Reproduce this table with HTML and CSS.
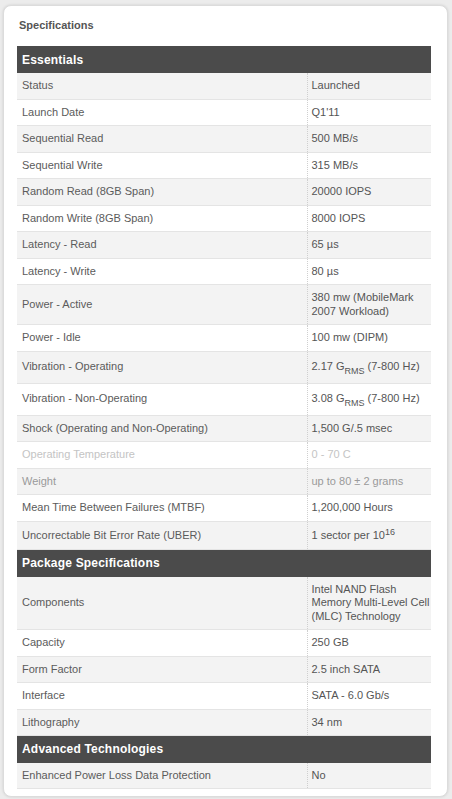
FILE: index.html
```html
<!DOCTYPE html>
<html>
<head>
<meta charset="utf-8">
<link rel="stylesheet" href="styles.css">
</head>
<body>
<div class="card">
  <h2 class="title">Specifications</h2>
  <table class="spec">
    <colgroup>
      <col class="col-k">
      <col class="col-v">
    </colgroup>
    <tbody>
      <tr class="head"><th colspan="2">Essentials</th></tr>
      <tr><td class="k">Status</td><td class="v">Launched</td></tr>
      <tr><td class="k">Launch Date</td><td class="v">Q1'11</td></tr>
      <tr><td class="k">Sequential Read</td><td class="v">500 MB/s</td></tr>
      <tr><td class="k">Sequential Write</td><td class="v">315 MB/s</td></tr>
      <tr><td class="k">Random Read (8GB Span)</td><td class="v">20000 IOPS</td></tr>
      <tr><td class="k">Random Write (8GB Span)</td><td class="v">8000 IOPS</td></tr>
      <tr><td class="k">Latency - Read</td><td class="v">65 µs</td></tr>
      <tr><td class="k">Latency - Write</td><td class="v">80 µs</td></tr>
      <tr><td class="k">Power - Active</td><td class="v">380 mw (MobileMark 2007 Workload)</td></tr>
      <tr><td class="k">Power - Idle</td><td class="v">100 mw (DIPM)</td></tr>
      <tr class="tall"><td class="k">Vibration - Operating</td><td class="v">2.17 G<sub>RMS</sub> (7-800 Hz)</td></tr>
      <tr class="tall"><td class="k">Vibration - Non-Operating</td><td class="v">3.08 G<sub>RMS</sub> (7-800 Hz)</td></tr>
      <tr><td class="k">Shock (Operating and Non-Operating)</td><td class="v">1,500 G/.5 msec</td></tr>
      <tr class="faded"><td class="k">Operating Temperature</td><td class="v">0 - 70 C</td></tr>
      <tr class="dim"><td class="k">Weight</td><td class="v">up to 80 ± 2 grams</td></tr>
      <tr><td class="k">Mean Time Between Failures (MTBF)</td><td class="v">1,200,000 Hours</td></tr>
      <tr class="sup-row"><td class="k">Uncorrectable Bit Error Rate (UBER)</td><td class="v">1 sector per 10<sup>16</sup></td></tr>
    </tbody>
    <tbody>
      <tr class="head"><th colspan="2">Package Specifications</th></tr>
      <tr><td class="k">Components</td><td class="v">Intel NAND Flash Memory Multi-Level Cell (MLC) Technology</td></tr>
      <tr><td class="k">Capacity</td><td class="v">250 GB</td></tr>
      <tr><td class="k">Form Factor</td><td class="v">2.5 inch SATA</td></tr>
      <tr><td class="k">Interface</td><td class="v">SATA - 6.0 Gb/s</td></tr>
      <tr><td class="k">Lithography</td><td class="v">34 nm</td></tr>
    </tbody>
    <tbody>
      <tr class="head"><th colspan="2">Advanced Technologies</th></tr>
      <tr><td class="k">Enhanced Power Loss Data Protection</td><td class="v">No</td></tr>
    </tbody>
  </table>
</div>
</body>
</html>
```
FILE: styles.css
```css
html, body {
  margin: 0;
  padding: 0;
}
body {
  background: #ececec;
  font-family: "Liberation Sans", Arial, sans-serif;
  width: 452px;
  height: 799px;
  overflow: hidden;
}
.card {
  margin: 5px 4px 0 3px;
  height: 792px;
  box-sizing: border-box;
  background: #fff;
  border: 1px solid #dcdcdc;
  border-radius: 8px;
  box-shadow: 0 0 3px rgba(0,0,0,0.12);
  padding: 12px 16px 0 13px;
}
.title {
  margin: 0 0 14px 2px;
  font-size: 11px;
  line-height: 14px;
  font-weight: bold;
  color: #555;
}
.spec {
  width: 414px;
  border-collapse: collapse;
  table-layout: fixed;
}
.col-k {
  width: 290px;
}
.col-v {
  width: 124px;
}
.spec th {
  background: #4b4b4b;
  color: #fff;
  text-align: left;
  font-size: 12px;
  font-weight: bold;
  height: 27px;
  padding: 0 5px;
  box-sizing: border-box;
  letter-spacing: 0.2px;
}
.spec td {
  font-size: 11px;
  line-height: 13.5px;
  padding: 6px 5px;
  vertical-align: middle;
  border-bottom: 1px solid #e4e4e4;
  color: #5b5b5b;
}
.spec td.k {
  border-right: 1px dotted #cfcfcf;
}
.spec td.v {
  padding-left: 4px;
  padding-right: 0;
  color: #555;
}
.spec tr:nth-child(even) td {
  background: #f3f3f3;
}
.spec tr:nth-child(odd) td {
  background: #fff;
}
.spec tr.tall td {
  padding-top: 8.75px;
  padding-bottom: 8.75px;
}
.spec tr.sup-row td {
  padding-top: 7px;
  padding-bottom: 7px;
}
.spec sub, .spec sup {
  font-size: 9px;
  line-height: 0;
}
.spec sub {
  vertical-align: -4px;
}
.spec sup {
  vertical-align: 4px;
}
.spec tr.faded td {
  color: #c4c4c4;
}
.spec tr.dim td {
  color: #9a9a9a;
}
```
